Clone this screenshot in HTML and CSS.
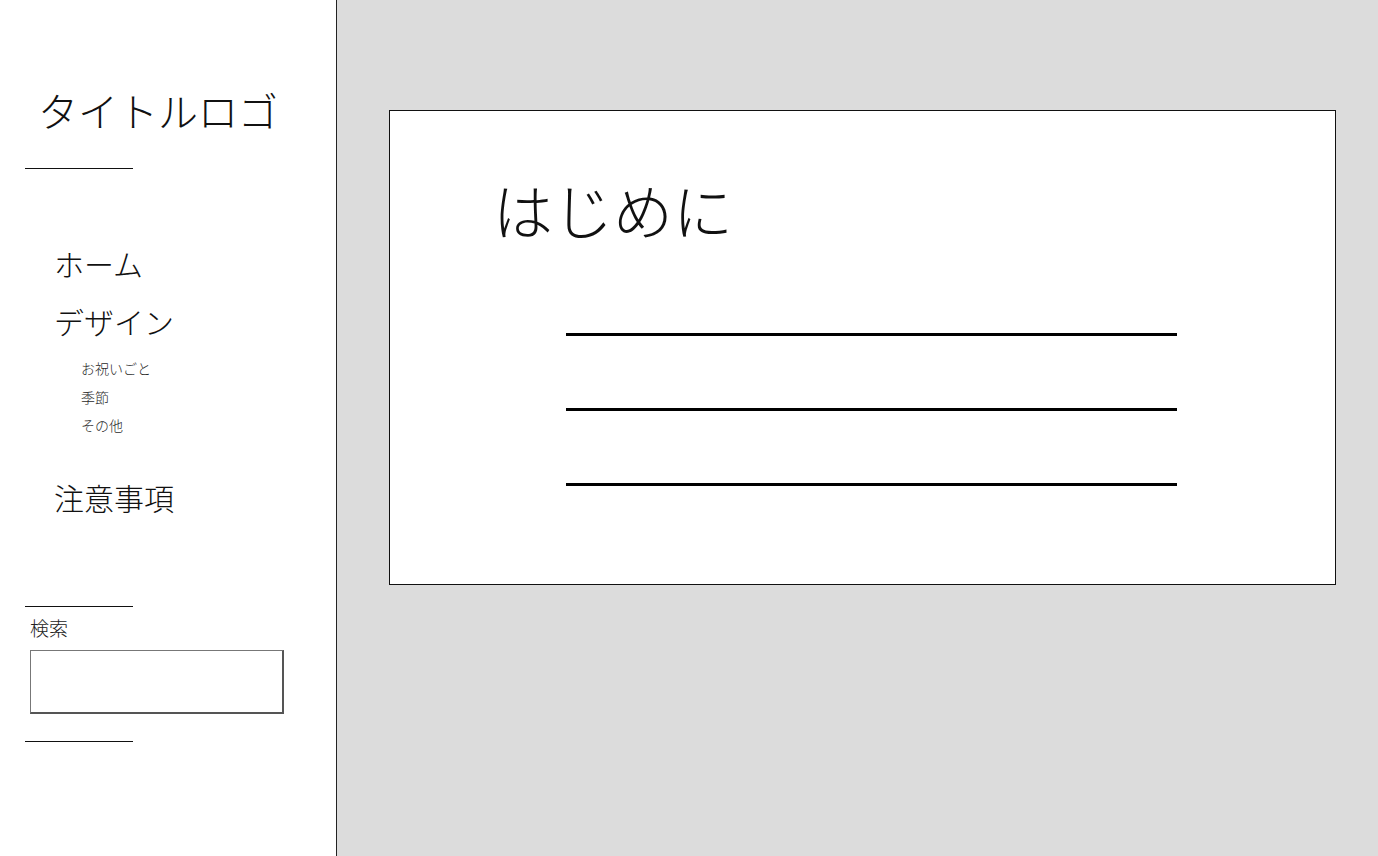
FILE: index.html
```html
<!DOCTYPE html>
<html lang="ja">
<head>
<meta charset="utf-8">
<title>タイトルロゴ</title>
<link rel="stylesheet" href="styles.css">
</head>
<body>
<div class="layout">
  <aside class="sidebar">
    <h1 class="logo">タイトルロゴ</h1>
    <hr class="rule">
    <nav class="nav">
      <a class="nav-item" href="#">ホーム</a>
      <a class="nav-item" href="#">デザイン</a>
      <ul class="sub-nav">
        <li><a href="#">お祝いごと</a></li>
        <li><a href="#">季節</a></li>
        <li><a href="#">その他</a></li>
      </ul>
      <a class="nav-item nav-last" href="#">注意事項</a>
    </nav>
    <hr class="rule rule-search">
    <div class="search">
      <label class="search-label" for="q">検索</label>
      <input class="search-input" id="q" type="text">
    </div>
    <hr class="rule rule-bottom">
  </aside>
  <main class="main">
    <section class="card">
      <h2 class="card-title">はじめに</h2>
      <div class="lines">
        <span class="line"></span>
        <span class="line"></span>
        <span class="line"></span>
      </div>
    </section>
  </main>
</div>
</body>
</html>
```
FILE: styles.css
```css
html, body {
  margin: 0;
  padding: 0;
  height: 100%;
}
body {
  font-family: "Noto Sans CJK JP", "Noto Sans", sans-serif;
  font-weight: 300;
  color: #111;
  background: #dcdcdc;
}
.layout {
  display: flex;
  min-height: 856px;
}
.sidebar {
  width: 336px;
  flex: 0 0 336px;
  background: #fff;
  border-right: 1px solid #222;
  display: flex;
  flex-direction: column;
}
.logo {
  margin: 80px 0 0 38px;
  font-size: 40px;
  font-weight: 300;
  line-height: 60px;
  letter-spacing: 0;
}
.rule {
  width: 108px;
  margin: 0 0 0 25px;
  border: 0;
  border-top: 1px solid #111;
  height: 0;
}
.logo + .rule {
  margin-top: 28px;
}
.nav {
  display: flex;
  flex-direction: column;
  margin: 65px 0 0 54px;
}
.nav a {
  color: #111;
  text-decoration: none;
}
.nav-item {
  font-size: 30px;
  line-height: 58px;
}
.sub-nav {
  list-style: none;
  margin: 4px 0 0 0;
  padding: 0 0 0 27px;
  font-size: 14px;
  line-height: 28.5px;
}
.sub-nav a {
  color: #2a2a2a;
}
.nav-last {
  margin-top: 28px;
}
.rule-search {
  margin-top: 80px;
}
.search {
  display: flex;
  flex-direction: column;
  padding: 9px 0 0 30px;
}
.search-label {
  font-size: 19px;
  line-height: 24px;
  margin-left: 0;
  color: #222;
}
.search-input {
  box-sizing: border-box;
  width: 254px;
  height: 64px;
  margin-top: 10px;
  border-style: solid;
  border-width: 1px 2px 2px 1px;
  border-color: #777 #555 #555 #777;
  background: #fff;
  padding: 0;
}
.rule-bottom {
  margin-top: 27px;
}
.main {
  flex: 1;
  padding: 110px 42px 0 52px;
}
.card {
  background: #fff;
  border: 1px solid #111;
  height: 473px;
  box-sizing: content-box;
}
.card-title {
  margin: 58px 0 0 103px;
  font-size: 60px;
  font-weight: 300;
  line-height: 80px;
  letter-spacing: 0;
}
.lines {
  display: flex;
  flex-direction: column;
  gap: 72px;
  margin: 84px 0 0 176px;
  width: 611px;
}
.line {
  display: block;
  height: 3px;
  background: #000;
}
```
